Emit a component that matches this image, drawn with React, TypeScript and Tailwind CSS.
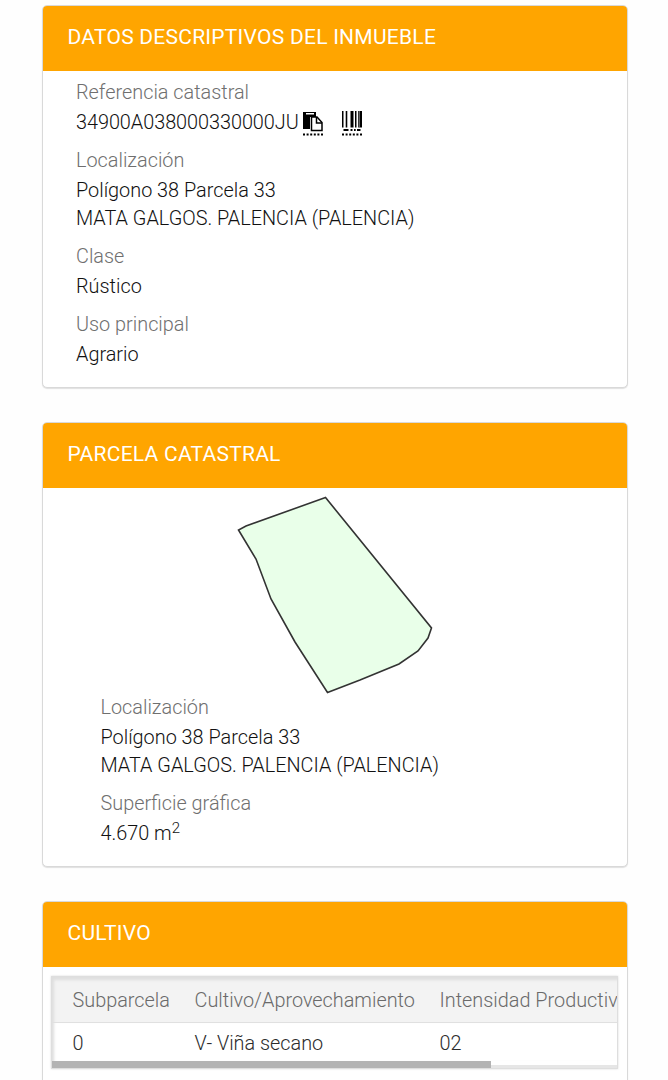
import type { ReactNode } from "react";

function Card({ title, className, children }: { title: string; className: string; children: ReactNode }) {
  return (
    <section className={`flex shrink-0 flex-col overflow-hidden rounded-[5px] border border-[#d9d9d9] bg-white shadow-[0_1px_1px_rgba(0,0,0,0.12)] ${className}`}>
      <h2 className="flex h-[65px] shrink-0 items-center bg-[#ffa500] pb-[3px] pl-[24.5px] text-[21px] font-normal tracking-[0.25px] text-white">
        {title}
      </h2>
      {children}
    </section>
  );
}

function Field({ label, children }: { label: string; children: ReactNode }) {
  return (
    <div className="flex flex-col gap-[2px]">
      <dt className="h-7 text-[#6f6f6f]">{label}</dt>
      <dd>{children}</dd>
    </div>
  );
}

function PasteIcon() {
  return (
    <svg className="block" width="20" height="25" viewBox="0 0 20 25">
      <path d="M0 1H13V6H7V18H0Z" fill="#000" />
      <path d="M3 2H11V3.5H3Z" fill="#fff" />
      <path d="M8.5 6H14L19 11.5V19.5H8.5Z" fill="#fff" stroke="#000" strokeWidth="1.5" />
      <path d="M13.5 6V12H19" fill="none" stroke="#000" strokeWidth="1.5" />
      <path d="M0 23.5H20" stroke="#000" strokeWidth="2" strokeDasharray="2 1.6" />
    </svg>
  );
}

function BarcodeIcon() {
  return (
    <svg className="block" width="21" height="25" viewBox="0 0 21 25">
      <path d="M0 0H1.5V16.5H0ZM3.7 0H5.3V16.5H3.7ZM8.5 0H11.5V16.5H8.5ZM13 0H14.5V16.5H13ZM16.2 0H20V16.5H16.2Z" fill="#000" />
      <path d="M17.4 0H18V16.5H17.4Z" fill="#aaa" />
      <path d="M1.5 18H6.5V20H1.5ZM8.5 18H10.5V20H8.5ZM12 18H13.7V20H12ZM15 18H18.5V20H15Z" fill="#000" />
      <path d="M0 23.5H20" stroke="#000" strokeWidth="2" strokeDasharray="2 1.6" />
    </svg>
  );
}

export default function App() {
  return (
    <main className="flex h-[1080px] flex-col gap-[34px] overflow-hidden bg-[#fefefe] pt-[5px] pr-[40px] pl-[42px] font-['Roboto',sans-serif] text-[19.85px] leading-[28px] font-light text-[#111]">
      <Card title="DATOS DESCRIPTIVOS DEL INMUEBLE" className="h-[383px]">
        <dl className="flex flex-col gap-[10px] pt-[8px] pl-[33px]">
          <Field label="Referencia catastral">
            <span className="flex h-7">
              <span className="tracking-[-0.04px]">34900A038000330000JU</span>
              <span className="ml-[4.5px] flex gap-[18.5px] pt-[2px]">
                <PasteIcon />
                <BarcodeIcon />
              </span>
            </span>
          </Field>
          <Field label="Localización">
            Polígono 38 Parcela 33
            <br />
            MATA GALGOS. PALENCIA (PALENCIA)
          </Field>
          <Field label="Clase">Rústico</Field>
          <Field label="Uso principal">Agrario</Field>
        </dl>
      </Card>

      <Card title="PARCELA CATASTRAL" className="h-[445px]">
        <svg className="ml-[193px] block shrink-0" width="200" height="204" viewBox="236 488 200 204" overflow="visible">
          <path
            d="M325.5 497.5L246 526L238.5 530L256 559L271 599L295 642L327.5 692.5L360 680L399 664L418 651L428 638L431.5 628Z"
            fill="#e9ffe9"
            stroke="#333"
            strokeWidth="1.6"
          />
        </svg>
        <dl className="flex flex-col gap-[10px] pt-[2px] pl-[57.5px]">
          <Field label="Localización">
            Polígono 38 Parcela 33
            <br />
            MATA GALGOS. PALENCIA (PALENCIA)
          </Field>
          <Field label="Superficie gráfica">
            4.670 m<sup className="text-[15px]">2</sup>
          </Field>
        </dl>
      </Card>

      <Card title="CULTIVO" className="h-[220px]">
        <div className="mt-[9px] mr-[9px] ml-[8px] h-[93px] overflow-hidden border border-[#dedede] shadow-[0_0_2px_rgba(0,0,0,0.15)]">
          <div className="grid h-[46px] grid-cols-[122px_245px_300px] border-b border-[#e0e0e0] bg-[#f3f3f3] pt-[10px] pl-[20.5px] whitespace-nowrap text-[#6a6a6a] shadow-[inset_4px_5px_3px_-2px_#dedede]">
            <span>Subparcela</span>
            <span>Cultivo/Aprovechamiento</span>
            <span>Intensidad Productiva</span>
          </div>
          <div className="grid h-[38px] grid-cols-[122px_245px_300px] pt-[7px] pl-[20.5px] text-[#2c2c2c] shadow-[inset_4px_0_3px_-2px_#dedede]">
            <span>0</span>
            <span>V- Viña secano</span>
            <span>02</span>
          </div>
          <div className="flex h-[7px] items-end">
            <div className="h-[7px] w-[439px] bg-[#b3b3b3]" />
            <div className="h-[3px] flex-1 bg-[#e6e6e6]" />
          </div>
        </div>
      </Card>
    </main>
  );
}
